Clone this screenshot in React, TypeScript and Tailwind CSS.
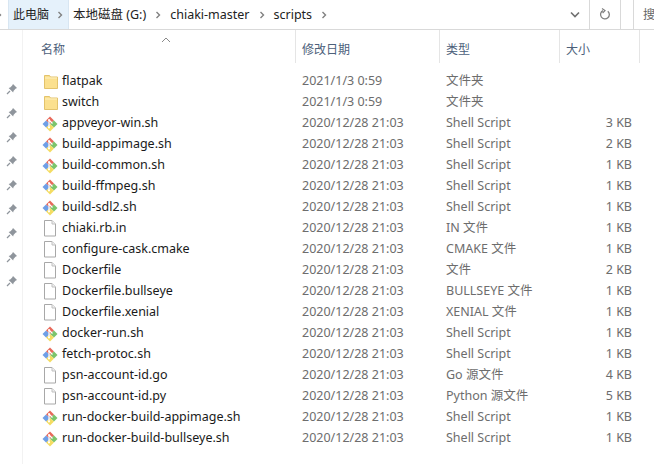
const FONT = "font-['Noto_Sans','Noto_Sans_CJK_SC',sans-serif]";

type FileKind = 'folder' | 'git' | 'blank';

type Row = { name: string; date: string; type: string; size: string; kind: FileKind };

const D1 = '2021/1/3 0:59';
const D2 = '2020/12/28 21:03';

const ROWS: Row[] = [
  { name: 'flatpak', date: D1, type: '文件夹', size: '', kind: 'folder' },
  { name: 'switch', date: D1, type: '文件夹', size: '', kind: 'folder' },
  { name: 'appveyor-win.sh', date: D2, type: 'Shell Script', size: '3 KB', kind: 'git' },
  { name: 'build-appimage.sh', date: D2, type: 'Shell Script', size: '2 KB', kind: 'git' },
  { name: 'build-common.sh', date: D2, type: 'Shell Script', size: '1 KB', kind: 'git' },
  { name: 'build-ffmpeg.sh', date: D2, type: 'Shell Script', size: '1 KB', kind: 'git' },
  { name: 'build-sdl2.sh', date: D2, type: 'Shell Script', size: '1 KB', kind: 'git' },
  { name: 'chiaki.rb.in', date: D2, type: 'IN 文件', size: '1 KB', kind: 'blank' },
  { name: 'configure-cask.cmake', date: D2, type: 'CMAKE 文件', size: '1 KB', kind: 'blank' },
  { name: 'Dockerfile', date: D2, type: '文件', size: '2 KB', kind: 'blank' },
  { name: 'Dockerfile.bullseye', date: D2, type: 'BULLSEYE 文件', size: '1 KB', kind: 'blank' },
  { name: 'Dockerfile.xenial', date: D2, type: 'XENIAL 文件', size: '1 KB', kind: 'blank' },
  { name: 'docker-run.sh', date: D2, type: 'Shell Script', size: '1 KB', kind: 'git' },
  { name: 'fetch-protoc.sh', date: D2, type: 'Shell Script', size: '1 KB', kind: 'git' },
  { name: 'psn-account-id.go', date: D2, type: 'Go 源文件', size: '4 KB', kind: 'blank' },
  { name: 'psn-account-id.py', date: D2, type: 'Python 源文件', size: '5 KB', kind: 'blank' },
  { name: 'run-docker-build-appimage.sh', date: D2, type: 'Shell Script', size: '1 KB', kind: 'git' },
  { name: 'run-docker-build-bullseye.sh', date: D2, type: 'Shell Script', size: '1 KB', kind: 'git' },
];

const PINS = [0, 1, 2, 3, 4, 5, 6, 7, 8];

const ICON_INSET: Record<FileKind, string> = {
  folder: 'pl-[3px]',
  blank: 'pl-[2px]',
  git: 'pl-[1px]',
};

const Chevron = () => (
  <svg width="6" height="8" viewBox="0 0 6 8" className="shrink-0">
    <path d="M1.5 1 L4.5 4 L1.5 7" fill="none" stroke="#808080" strokeWidth="1.4" />
  </svg>
);

const FileIcon = ({ kind }: { kind: FileKind }) => {
  if (kind === 'folder') {
    return (
      <svg width="14" height="16" viewBox="0 0 14 16">
        <path d="M0.5 1.5 H5.5 L6.5 3 H13.5 V14.5 H0.5 Z" fill="#fbe08e" stroke="#e3c36c" />
        <path d="M1 4 H13" stroke="#fdf0c2" />
      </svg>
    );
  }
  if (kind === 'blank') {
    return (
      <svg width="14" height="17" viewBox="0 0 14 17">
        <path d="M1.5 0.5 H9 L12.5 4 V16 H1.5 Z" fill="#fff" stroke="#a8a8a8" />
        <path d="M9 0.5 V4 H12.5" fill="#f0f0f0" stroke="#c0c0c0" />
      </svg>
    );
  }
  return (
    <svg width="18" height="18" viewBox="1 0 18 18">
      <path d="M9 1.5 L13 5.5 L9 9 L5 5.5 Z" fill="#e8695a" />
      <path d="M9 9 L13 5.5 L16.5 9 L13 12.5 Z" fill="#7bc46c" />
      <path d="M9 9 L13 12.5 L9 16.5 L5 12.5 Z" fill="#f4dc62" />
      <path d="M1.5 9 L5 5.5 L9 9 L5 12.5 Z" fill="#6f9fe6" />
      <path d="M8 5 L11.5 8.5 M8 5 L8 13" stroke="#fff" strokeWidth="1.2" />
      <circle cx="8" cy="5" r="1" fill="#fff" />
      <circle cx="8" cy="12.5" r="1" fill="#fff" />
    </svg>
  );
};

const Pin = () => (
  <svg width="12" height="12" viewBox="0 0 12 12">
    <path d="M7 1 L11 5 L9.5 5.8 L7.5 8 L7.2 9.6 L2.6 5 L4.2 4.6 L6.2 2.6 Z" fill="#8f959c" />
    <path d="M4 8 L1 11" stroke="#8f959c" strokeWidth="1.2" />
  </svg>
);

const App = () => {
  return (
    <div className={`${FONT} w-[654px] h-[464px] bg-white overflow-hidden text-[12.5px] leading-none`}>
      {/* address bar */}
      <div className="flex h-[30px] border-b border-[#d9d9d9]">
        <div className="flex items-center flex-1 min-w-0 text-[#222] whitespace-nowrap">
          <div className="-ml-[4px] mr-[6px]"><Chevron /></div>
          <div className="flex items-center self-stretch w-[61px] pl-[4px] bg-[#e5f1fb] border-x border-[#d8e6f2]">
            <span className="text-[12px] pt-[1px]">此电脑</span>
            <div className="ml-[8px]"><Chevron /></div>
          </div>
          <span className="ml-[4px] pt-[1px]">本地磁盘 (G:)</span>
          <div className="ml-[9px] mr-[9px]"><Chevron /></div>
          <span className="pt-[1px]">chiaki-master</span>
          <div className="ml-[9px] mr-[9px]"><Chevron /></div>
          <span className="pt-[1px]">scripts</span>
          <div className="ml-[9px]"><Chevron /></div>
        </div>
        <div className="w-[30px] flex items-center justify-center border-r border-[#d9d9d9]">
          <svg width="10" height="7" viewBox="0 0 10 7">
            <path d="M1 1.5 L5 5.5 L9 1.5" fill="none" stroke="#707070" strokeWidth="1.6" />
          </svg>
        </div>
        <div className="w-[31px] flex items-center justify-center border-r border-[#d9d9d9]">
          <svg width="12" height="13" viewBox="0 0 12 13">
            <path d="M8.8 3.2 A4.4 4.4 0 1 1 4 2.6" fill="none" stroke="#808080" strokeWidth="1.3" />
            <path d="M3 0.5 L6 2.6 L3.6 5" fill="none" stroke="#808080" strokeWidth="1.2" />
          </svg>
        </div>
        <div className="w-[21px] ml-[12px] border-l border-[#d9d9d9] overflow-hidden">
          <span className="block mt-[9px] ml-[9px] text-[12px] text-[#666] whitespace-nowrap">搜</span>
        </div>
      </div>

      <div className="flex h-[434px]">
        {/* quick access pins */}
        <div className="w-[23px] shrink-0 border-r border-[#f2f2f2] pt-[53px] pl-[2px] flex flex-col items-center gap-[12px]">
          {PINS.map((p) => (
            <Pin key={p} />
          ))}
        </div>

        <div className="flex-1 min-w-0">
          {/* column headers */}
          <div className="relative flex h-[41px] text-[12px] text-[#4c607a]">
            <svg width="10" height="6" viewBox="0 0 10 6" className="absolute left-[138px] top-[7px]">
              <path d="M1 5 L5 1 L9 5" fill="none" stroke="#8a8a8a" />
            </svg>
            <div className="w-[273px] pl-[18px] pt-[14px] border-r border-[#e5e5e5] mb-[8px]">名称</div>
            <div className="w-[144px] pl-[6px] pt-[14px] border-r border-[#e5e5e5] mb-[8px]">修改日期</div>
            <div className="w-[120px] pl-[6px] pt-[14px] border-r border-[#e5e5e5] mb-[8px]">类型</div>
            <div className="w-[80px] pl-[6px] pt-[14px] border-r border-[#e5e5e5] mb-[8px]">大小</div>
          </div>

          {/* file rows */}
          <div>
            {ROWS.map((row) => (
              <div key={row.name} className="flex items-center h-[21px]">
                <div className="w-[273px] flex items-center pl-[18px]">
                  <div className={`w-[21px] shrink-0 ${ICON_INSET[row.kind]}`}>
                    <FileIcon kind={row.kind} />
                  </div>
                  <span className="text-[#1a1a1a] whitespace-nowrap">{row.name}</span>
                </div>
                <div className="w-[144px] pl-[6px] text-[#6d6d6d] whitespace-nowrap">{row.date}</div>
                <div className="w-[120px] pl-[6px] text-[#6d6d6d] whitespace-nowrap">{row.type}</div>
                <div className="w-[72px] text-right text-[#6d6d6d] whitespace-nowrap">{row.size}</div>
              </div>
            ))}
          </div>
        </div>
      </div>
    </div>
  );
};

export default App;
